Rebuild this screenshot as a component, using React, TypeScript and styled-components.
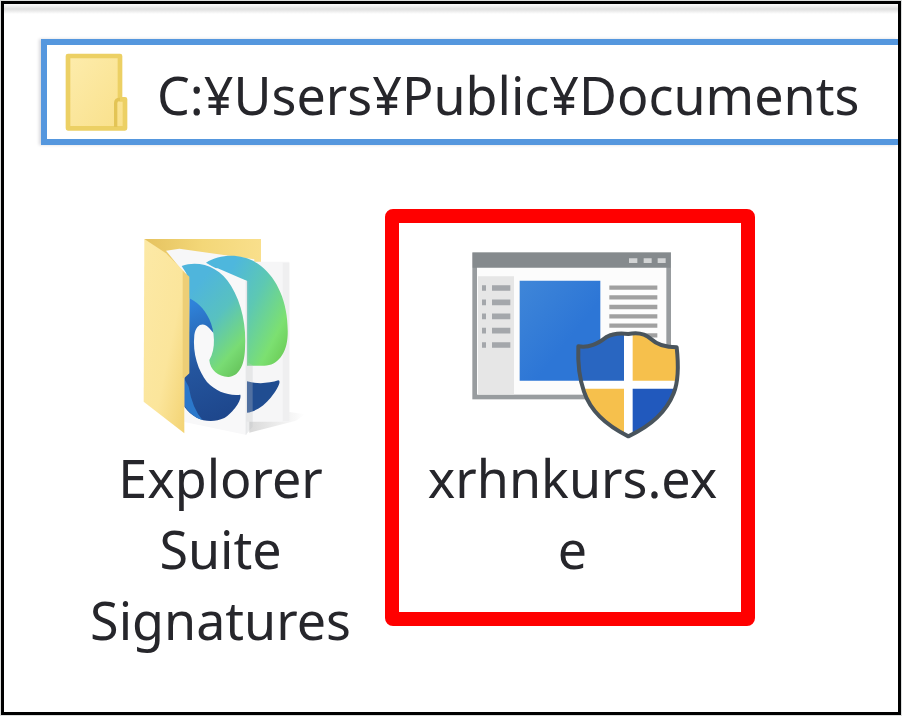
import React, { useState } from 'react';
import styled, { createGlobalStyle } from 'styled-components';

const GlobalStyle = createGlobalStyle`
  *, *::before, *::after { box-sizing: border-box; }
  body {
    margin: 0;
    background: #dcdedd;
    font-family: "Noto Sans", "Noto Sans CJK JP", sans-serif;
    font-size: 52px;
    color: #26262b;
  }
`;

const Window = styled.main`
  margin: 1px;
  min-height: calc(100vh - 2px);
  border: 3px solid #000;
  background: #fff;
  display: flex;
  flex-direction: column;
  overflow: hidden;
`;

const TopEdge = styled.div`
  height: 10px;
  background: linear-gradient(#fbfbfb, #dedede 50%, #fff);
`;

const AddressBar = styled.label`
  display: flex;
  align-items: center;
  gap: 28px;
  height: 106px;
  margin: 25px 0 0 37px;
  padding-left: 18px;
  border: 6px solid #5597de;
  border-right: 0;
  box-shadow: -2px 0 3px #d9d9dd;
`;

const PathInput = styled.input`
  flex: 1;
  min-width: 0;
  height: 80px;
  padding: 4px 0 0;
  border: 0;
  outline: 0;
  background: transparent;
  font: inherit;
  color: inherit;
`;

const FileList = styled.ul`
  list-style: none;
  display: flex;
  align-items: flex-start;
  gap: 3px;
  margin: 64px 0 0;
  padding: 0 0 0 50px;
`;

const FileItem = styled.li<{ $marked?: boolean }>`
  width: ${({ $marked }) => ($marked ? 370 : 328)}px;
  min-height: 417px;
  border: 14px solid ${({ $marked }) => ($marked ? '#ff0000' : 'transparent')};
  border-radius: 8px;
`;

const FileButton = styled.button`
  display: flex;
  flex-direction: column;
  align-items: center;
  gap: 2px;
  width: 100%;
  padding: 13px 0 0 5px;
  border: 0;
  background: none;
  font: inherit;
  color: inherit;
`;

const FileName = styled.span`
  width: 303px;
  line-height: 71px;
  overflow-wrap: anywhere;
`;

const SmallFolder = () => (
  <svg width="64" height="80" viewBox="195 155 192 240" aria-hidden="true">
    <defs>
      <linearGradient id="small-folder" x1="0" y1="0" x2="1" y2="1">
        <stop offset="0" stopColor="#fdecac" />
        <stop offset="1" stopColor="#f9e08a" />
      </linearGradient>
    </defs>
    <path d="M204 167H360V297H375V384H204Z" fill="url(#small-folder)" stroke="#ecd064" strokeWidth="14" strokeLinejoin="round" />
    <path d="M347 380V308Q347 297 360 297" fill="none" stroke="#e3c455" strokeWidth="10" />
  </svg>
);

const DocumentFolder = () => (
  <svg width="170" height="204" viewBox="45 48 510 612" aria-hidden="true">
    <defs>
      <linearGradient id="folder-back" x1="0" y1="0" x2="1" y2="0">
        <stop offset="0" stopColor="#e5c25f" />
        <stop offset="0.5" stopColor="#f3d778" />
        <stop offset="1" stopColor="#f9df8c" />
      </linearGradient>
      <linearGradient id="folder-flap" x1="0" y1="0" x2="1" y2="1">
        <stop offset="0" stopColor="#fce9a6" />
        <stop offset="0.6" stopColor="#fbe59b" />
        <stop offset="1" stopColor="#f3d373" />
      </linearGradient>
      <linearGradient id="wave-front" x1="205" y1="190" x2="345" y2="470" gradientUnits="userSpaceOnUse" gradientTransform="rotate(-22 275 330)">
        <stop offset="0.1" stopColor="#4fb5dc" />
        <stop offset="0.45" stopColor="#58c1c0" />
        <stop offset="0.78" stopColor="#79dc74" />
        <stop offset="1" stopColor="#63c057" />
      </linearGradient>
      <linearGradient id="wave-back" x1="320" y1="190" x2="480" y2="400" gradientUnits="userSpaceOnUse" gradientTransform="rotate(-25 400 290)">
        <stop offset="0" stopColor="#4eb7dd" />
        <stop offset="0.4" stopColor="#5dc8b3" />
        <stop offset="0.8" stopColor="#7ce071" />
        <stop offset="1" stopColor="#6ccd58" />
      </linearGradient>
      <linearGradient id="swirl" x1="190" y1="260" x2="330" y2="600" gradientUnits="userSpaceOnUse">
        <stop offset="0" stopColor="#2f83da" />
        <stop offset="0.5" stopColor="#24559e" />
        <stop offset="1" stopColor="#1d458a" />
      </linearGradient>
      <linearGradient id="cast" x1="0" y1="0" x2="1" y2="0">
        <stop offset="0" stopColor="#d9d9d9" />
        <stop offset="1" stopColor="#ffffff" />
      </linearGradient>
    </defs>
    <path d="M385 600L500 575L552 583L525 602L385 638Z" fill="url(#cast)" />
    <path d="M70 57H420V200H190Z" fill="url(#folder-back)" />
    <path d="M135 92L175 86L400 118V160H190Z" fill="#f7f7f8" />
    <path d="M375 125H505V605H375Z" fill="#f6f6f7" />
    <path d="M485 128H505V604H485Z" fill="#efeff0" />
    <path d="M255 128C300 100 370 98 420 138C470 178 503 250 500 345C498 400 470 437 430 437H378V183C340 174 300 154 255 128Z" fill="url(#wave-back)" />
    <path d="M378 484C410 493 445 490 472 481C482 482 470 508 449 533C430 556 405 575 378 578Z" fill="#204d91" />
    <path d="M190 150L290 145L377 182V645L190 606Z" fill="#f8f8f9" />
    <path d="M205 232C245 240 276 290 278 340L265 325C250 306 226 308 220 345C214 402 232 452 258 486C285 515 322 528 358 524C363 540 337 577 310 594C266 614 219 600 190 560V470L203 460Z" fill="url(#swirl)" />
    <path d="M192 480V560Q212 590 245 601Q214 565 203 500Z" fill="#2b78cb" />
    <path d="M182 138C235 120 295 140 330 197C363 250 377 320 372 387C370 438 353 469 322 471C291 470 267 449 265 420C286 387 281 332 265 298C249 263 225 243 202 233L196 160Z" fill="url(#wave-front)" />
    <path d="M374 183V645L395 620V435L382 428V183Z" fill="#bfc5c8" fillOpacity="0.3" />
    <path d="M70 57L135 100L190 155V640L68 545Z" fill="url(#folder-flap)" />
    <path d="M185 152L205 170V460L190 474L185 474Z" fill="#edce76" />
  </svg>
);

const TEXT_LINES = [158, 187, 216, 244, 272, 301];
const MENU_LINES = [159, 202, 244, 287, 330];
const SHIELD =
  'M355 334C388 339 412 327 438 307C460 294 485 294 505 297C528 292 552 293 573 312C592 330 620 337 650 337C655 382 656 438 641 475C620 528 575 572 505 604C442 573 391 527 372 470C358 430 353 383 355 334Z';

const ElevatedProgram = () => (
  <svg width="220" height="204" viewBox="9 3 660 612" aria-hidden="true">
    <defs>
      <linearGradient id="program-pane" x1="0" y1="0" x2="0.6" y2="0.6">
        <stop offset="0" stopColor="#3f86d8" />
        <stop offset="1" stopColor="#2d76d6" />
      </linearGradient>
      <clipPath id="shield-shape">
        <path d={SHIELD} />
      </clipPath>
    </defs>
    <rect x="44" y="59" width="582" height="427" fill="#fcfcfc" stroke="#989c9f" strokeWidth="14" />
    <path d="M38 53H632V98H38Z" fill="#858a8d" />
    <path d="M507 77H532M551 77H575M593 77H617" stroke="#d2d4d5" strokeWidth="14" />
    <path d="M54 124H162V478H54Z" fill="#e6e6e6" />
    {MENU_LINES.map((y) => (
      <path key={y} d={`M66 ${y}H78M96 ${y}H151`} stroke="#a4a7ab" strokeWidth="17" />
    ))}
    <path d="M179 137H421V437H179Z" fill="url(#program-pane)" />
    {TEXT_LINES.map((y) => (
      <path key={y} d={`M448 ${y}H592`} stroke="#a0a0a0" strokeWidth="13" />
    ))}
    <g clipPath="url(#shield-shape)">
      <path d="M340 280H670V620H340Z" fill="#fff" />
      <path d="M340 280H492V437H340Z" fill="#2966c1" />
      <path d="M518 280H670V437H518Z" fill="#f6c04c" />
      <path d="M340 461H492V620H340Z" fill="#f6c04c" />
      <path d="M518 461H670V620H518Z" fill="#2159bd" />
    </g>
    <path d={SHIELD} fill="none" stroke="#49545c" strokeWidth="12" strokeLinejoin="round" />
  </svg>
);

export default function App() {
  const [path, setPath] = useState('C:¥Users¥Public¥Documents');
  return (
    <>
      <GlobalStyle />
      <Window>
        <TopEdge />
        <AddressBar>
          <SmallFolder />
          <PathInput
            aria-label="Address"
            spellCheck={false}
            value={path}
            onChange={(e) => setPath(e.target.value)}
          />
        </AddressBar>
        <FileList>
          <FileItem>
            <FileButton type="button">
              <DocumentFolder />
              <FileName>Explorer Suite Signatures</FileName>
            </FileButton>
          </FileItem>
          <FileItem $marked>
            <FileButton type="button">
              <ElevatedProgram />
              <FileName>xrhnkurs.exe</FileName>
            </FileButton>
          </FileItem>
        </FileList>
      </Window>
    </>
  );
}
